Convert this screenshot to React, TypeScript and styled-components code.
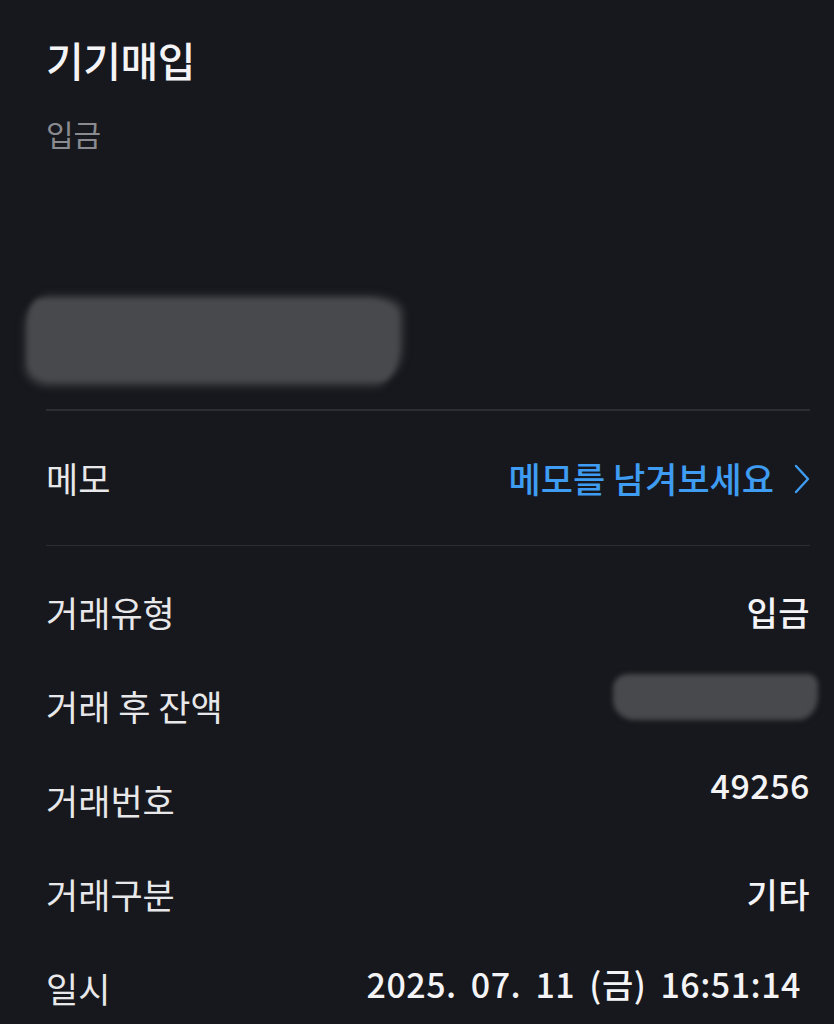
import React from 'react';
import styled, { createGlobalStyle } from 'styled-components';

const GlobalStyle = createGlobalStyle`
    html, body {
        margin: 0;
        padding: 0;
        background-color: #17181d;
    }
    body {
        font-family: "Noto Sans CJK KR", "Noto Sans", sans-serif;
        -webkit-font-smoothing: antialiased;
    }
`;

type Detail = {
    label: string;
    value?: string;
    hidden?: boolean;
    raise?: number;
    inset?: number;
};

const details: Detail[] = [
    { label: '거래유형', value: '입금' },
    { label: '거래 후 잔액', hidden: true, raise: 9 },
    { label: '거래번호', value: '49256', raise: 15 },
    { label: '거래구분', value: '기타' },
    { label: '일시', value: '2025. 07. 11 (금) 16:51:14', raise: 4, inset: 9 },
];

const App: React.FC = () => {
    return (
        <Page>
            <GlobalStyle />
            <Header>
                <Title>기기매입</Title>
                <Subtitle>입금</Subtitle>
                <AmountMask />
            </Header>
            <Divider />
            <MemoRow>
                <Label>메모</Label>
                <MemoLink>
                    메모를 남겨보세요
                    <svg width="16" height="30" viewBox="0 0 16 30" fill="none">
                        <polyline
                            points="2,2 14,15 2,28"
                            stroke="currentColor"
                            strokeWidth="2.4"
                            strokeLinecap="round"
                            strokeLinejoin="round"
                        />
                    </svg>
                </MemoLink>
            </MemoRow>
            <Divider />
            <DetailList>
                {details.map((d) => (
                    <DetailRow key={d.label}>
                        <Label>{d.label}</Label>
                        {d.hidden ? (
                            <BalanceMask $raise={d.raise ?? 0} />
                        ) : (
                            <Value $raise={d.raise ?? 0} $inset={d.inset ?? 0}>
                                {d.value}
                            </Value>
                        )}
                    </DetailRow>
                ))}
            </DetailList>
        </Page>
    );
};

export default App;

const Page = styled.div`
    display: flex;
    flex-direction: column;
    width: 834px;
    height: 1024px;
    box-sizing: border-box;
    padding: 0 24px 0 46px;
    background-color: #17181d;
    overflow: hidden;

    & > * {
        flex-shrink: 0;
    }
`;

const Header = styled.div`
    display: flex;
    flex-direction: column;
    padding-top: 33px;
`;

const Title = styled.div`
    font-size: 41px;
    font-weight: 500;
    line-height: 52px;
    color: #f4f4f6;
    letter-spacing: -0.5px;
`;

const Subtitle = styled.div`
    margin-top: 29px;
    font-size: 30px;
    line-height: 38px;
    color: #8a8b90;
`;

// 금액 가림 처리 (붓 자국 느낌)
const AmountMask = styled.div`
    flex-shrink: 0;
    width: 372px;
    height: 84px;
    margin: 146px 0 27px -19px;
    background-color: #48494c;
    border-radius: 14px 34px 18px 26px / 24px 18px 34px 20px;
    filter: blur(2.5px);
    box-shadow: 6px -4px 6px -2px #3e3f42, -4px 6px 6px -2px #3e3f42;
`;

const Divider = styled.div`
    height: 1.5px;
    background-color: #2d2e33;
`;

const Row = styled.div`
    display: flex;
    align-items: center;
    justify-content: space-between;
    flex-shrink: 0;
`;

const MemoRow = styled(Row)`
    height: 134px;
`;

const Label = styled.div`
    font-size: 35px;
    line-height: 48px;
    color: #e8e8ea;
`;

const MemoLink = styled.div`
    display: flex;
    align-items: center;
    gap: 20px;
    font-size: 35px;
    line-height: 48px;
    color: #3e9df2;
    font-weight: 500;

    svg {
        margin-top: 2px;
    }
`;

const DetailList = styled.div`
    display: flex;
    flex-direction: column;
    padding-top: 19px;
`;

const DetailRow = styled(Row)`
    height: 94px;
`;

const Value = styled.div<{ $raise: number; $inset: number }>`
    font-size: 34px;
    line-height: 48px;
    font-weight: 500;
    color: #f4f4f6;
    letter-spacing: 0.5px;
    word-spacing: 6px;
    margin-right: ${(p) => p.$inset}px;
    transform: translateY(${(p) => -p.$raise}px);
`;

const BalanceMask = styled.div<{ $raise: number }>`
    width: 205px;
    height: 46px;
    margin-right: -8px;
    background-color: #48494c;
    border-radius: 16px 10px 20px 22px / 14px 10px 24px 20px;
    filter: blur(2.5px);
    transform: translateY(${(p) => -p.$raise}px);
`;
